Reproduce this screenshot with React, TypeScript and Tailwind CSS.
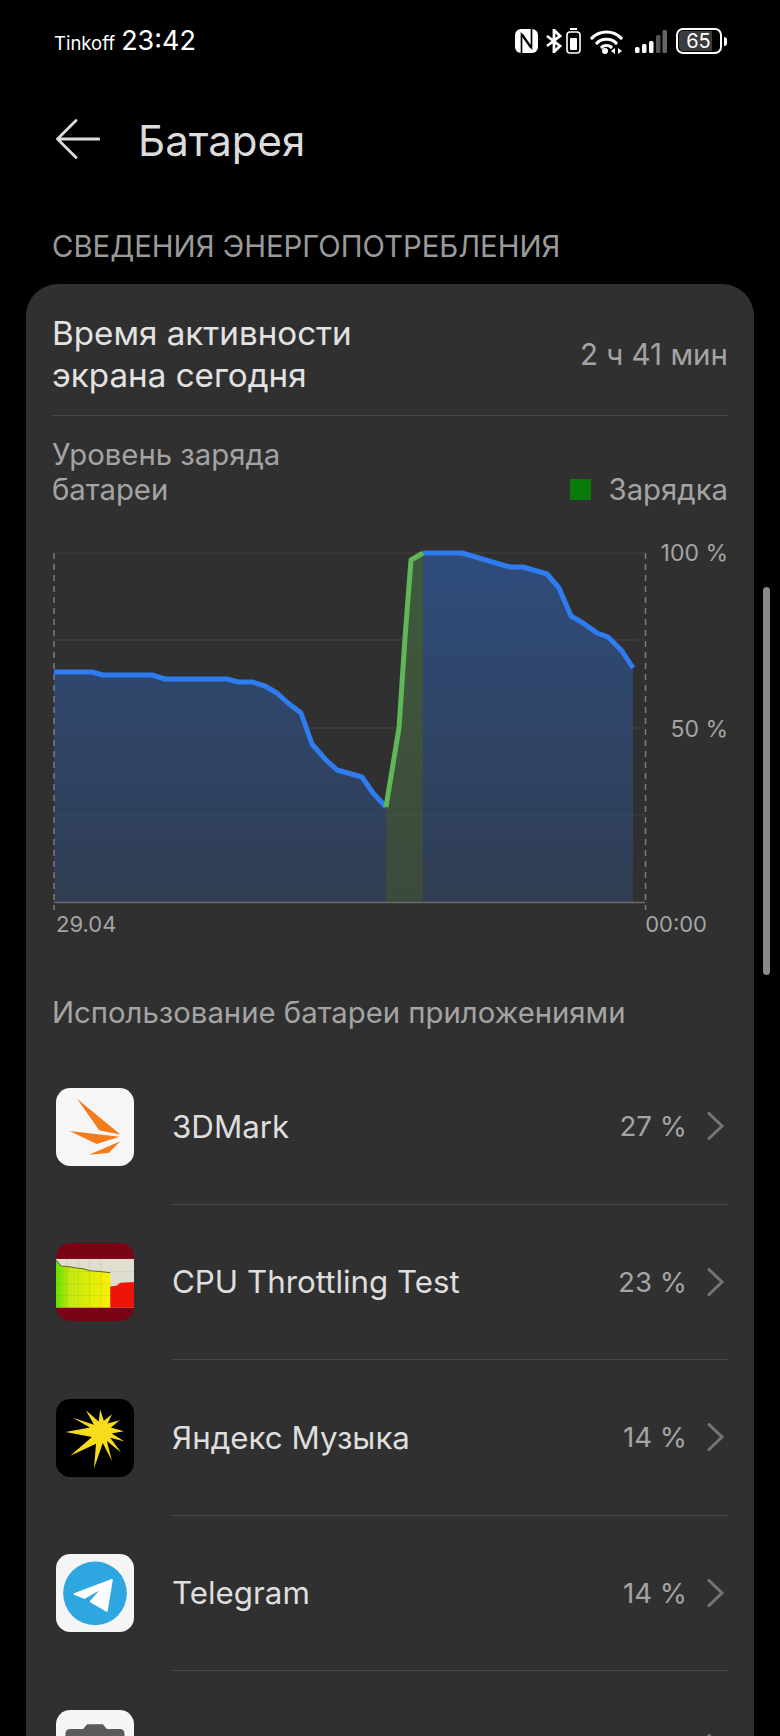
import { ReactNode } from 'react';

const blueA =
  '54,671 92,671 103,674 152,674 165,678 227,678 238,681 252,681 265,685 277,692 288,702 301,712 312,743 325,758 337,769 362,776 373,792 386,806';
const green = '386,806 399,727 405,637 411,559 423,552';
const blueB =
  '423,552 462,552 510,566 523,566 547,573 559,587 571,615 583,622 597,632 608,636 622,650 633,667';

//region Status bar
const StatusIcons = () => (
  <div className="flex items-center">
    {/* nfc */}
    <svg width="23" height="24" viewBox="0 0 23 24">
      <rect width="23" height="24" rx="6" fill="#fff" />
      <path d="M6.500 24V5.500L16 19M16.500 0v18.500L7 5" fill="none" stroke="#000" strokeWidth="1.700" />
    </svg>
    {/* bluetooth */}
    <svg width="16" height="24" viewBox="0 0 16 24" className="ml-[8px]">
      <path d="M1 7l13 10-6 6V1l6 6L1 17" stroke="#fff" strokeWidth="2.800" fill="none" />
    </svg>
    {/* small battery */}
    <svg width="15" height="26" viewBox="0 0 15 26" className="ml-[4px]">
      <rect x="4" y="0" width="7" height="2" fill="#fff" />
      <rect x="1" y="4" width="13" height="21" rx="3" stroke="#fff" strokeWidth="1.600" fill="none" />
      <rect x="4" y="10" width="7" height="12" rx="1" fill="#fff" />
    </svg>
    {/* wifi */}
    <svg width="33" height="25" viewBox="0 0 33 25" className="ml-[9px]">
      <path d="M2 9c8-8 21-8 29 0M7 14c5-5 14-5 19 0M12 18c2-2 7-2 9 0" stroke="#fff" strokeWidth="3.200" fill="none" strokeLinecap="round" />
      <circle cx="15" cy="22" r="3" fill="#fff" />
      <path d="M21 22l4-3v6zM32 22l-4-3v6z" fill="#fff" />
    </svg>
    {/* signal */}
    <svg width="32" height="24" viewBox="0 0 32 24" className="ml-[12px]">
      <rect x="0" y="18" width="4.500" height="6" rx="1.500" fill="#fff" />
      <rect x="7" y="15" width="4.500" height="9" rx="1.500" fill="#fff" />
      <rect x="14" y="12" width="4.500" height="12" rx="1.500" fill="#fff" />
      <rect x="21" y="6" width="4.500" height="18" rx="1.500" fill="#555" />
      <rect x="27.500" y="1" width="4.500" height="23" rx="1.500" fill="#666" />
    </svg>
    {/* battery */}
    <div className="ml-[9px] flex h-[26px] w-[46px] items-center rounded-[7px] border-2 border-white p-[1px]">
      <div className="flex h-full w-[33px] items-center justify-center rounded-l-[4px] bg-[#3c3c3c]">
        <span className="ml-[6px] text-[20px] leading-none text-white">65</span>
      </div>
    </div>
    <div className="ml-[2px] h-[9px] w-[3px] rounded-r-sm bg-white" />
  </div>
);

const StatusBar = () => (
  <div className="flex h-[82px] items-center justify-between pr-[53px] pl-[54px]">
    <div className="flex items-baseline text-white">
      <span className="text-[18.500px]">Tinkoff</span>
      <span className="ml-[6px] text-[27px]">23:42</span>
    </div>
    <StatusIcons />
  </div>
);
//endregion

//region App icons
const Mark3D = () => (
  <svg viewBox="0 0 230 230" className="h-full w-full">
    <rect width="230" height="230" rx="42" fill="#f6f6f6" />
    <polygon points="62,32 190,137 128,125" fill="#f57c1c" />
    <polygon points="40,127 188,144 120,165" fill="#f57c1c" />
    <polygon points="97,197 190,157 155,192" fill="#f57c1c" />
  </svg>
);

const CpuTest = () => (
  <svg viewBox="0 0 230 230" className="h-full w-full">
    <defs>
      <linearGradient id="cpuFill" x1="0" x2="1" y1="0" y2="0">
        <stop offset="0" stopColor="#5fe000" />
        <stop offset="0.25" stopColor="#c4ea10" />
        <stop offset="1" stopColor="#fbf000" />
      </linearGradient>
    </defs>
    <rect width="230" height="230" rx="42" fill="#7a0316" />
    <rect x="0" y="47" width="230" height="143" fill="#e0dfcf" />
    <polygon points="0,50 15,68 40,70 60,74 80,76 100,82 130,84 160,88 160,190 0,190" fill="url(#cpuFill)" />
    <polyline points="0,50 15,68 40,70 60,74 80,76 100,82 130,84 160,88" fill="none" stroke="#5b6a2a" strokeWidth="3" />
    <path d="M33 47v143M66 47v143M99 47v143M132 47v143M0 85h230M0 120h230M0 155h230" stroke="#8a8a40" strokeOpacity="0.25" strokeWidth="2" />
    <polygon points="160,128 178,126 190,117 230,115 230,190 160,190" fill="#ee1408" />
  </svg>
);

const YandexMusic = () => (
  <svg viewBox="0 0 230 230" className="h-full w-full">
    <rect width="230" height="230" rx="42" fill="#000" />
    <polygon
      points="28,97 100,84 50,55 112,76 88,33 126,66 130,30 141,64 165,45 152,72 188,63 162,84 200,95 164,102 202,125 160,114 192,158 150,124 165,183 138,130 112,205 118,132 42,167 106,112"
      fill="#f6dc1a"
    />
  </svg>
);

const Telegram = () => (
  <svg viewBox="0 0 230 230" className="h-full w-full">
    <rect width="230" height="230" rx="42" fill="#f5f5f5" />
    <circle cx="115" cy="116" r="94" fill="#2ea6e0" />
    <polygon
      points="165,76 54,118 84,130 140,97 102,140 150,168"
      fill="#fff"
      stroke="#fff"
      strokeWidth="5"
      strokeLinejoin="round"
    />
  </svg>
);

const Camera = () => (
  <svg viewBox="0 0 230 230" className="h-full w-full">
    <rect width="230" height="230" rx="42" fill="#f5f5f5" />
    <path d="M28 70q0-14 14-14h38l12-14h46l12 14h38q14 0 14 14v110H28z" fill="#5a5a5a" />
  </svg>
);
//endregion

//region App row
const AppRow = ({ icon, name, value }: { icon: ReactNode; name: string; value: string }) => (
  <div className="flex h-[155.5px] items-center">
    <div className="mr-[38px] ml-[4px] h-[78px] w-[78px] shrink-0">{icon}</div>
    <div className="flex h-full grow items-center justify-between border-b border-[#484848]">
      <span className="pt-[2px] text-[31.300px] text-[#dedede]">{name}</span>
      <div className="flex items-center">
        <span className="pt-[2px] text-[27.700px] text-[#a4a4a4]">{value}</span>
        <svg width="18" height="28" viewBox="0 0 18 28" className="mr-[3px] ml-[20px]">
          <path d="M2 1.500l13 12.500-13 12.500" fill="none" stroke="#757575" strokeWidth="3" strokeLinecap="round" />
        </svg>
      </div>
    </div>
  </div>
);
//endregion

//region Chart
const Chart = () => (
  <div className="flex">
    <svg width="596" height="361" viewBox="52 548 596 361" className="shrink-0">
      <defs>
        <linearGradient id="blueFill" gradientUnits="userSpaceOnUse" x1="0" x2="0" y1="552" y2="901">
          <stop offset="0" stopColor="#2f4c7c" />
          <stop offset="1" stopColor="#303d52" />
        </linearGradient>
        <linearGradient id="greenFill" gradientUnits="userSpaceOnUse" x1="0" x2="0" y1="552" y2="901">
          <stop offset="0" stopColor="#3f5a3b" />
          <stop offset="1" stopColor="#3c4a3c" />
        </linearGradient>
      </defs>
      {[552, 639, 727, 814].map((y) => (
        <line key={y} x1="54" x2="645" y1={y} y2={y} stroke="#404040" strokeWidth="1" />
      ))}
      <polygon points={`54,901 ${blueA} 386,901`} fill="url(#blueFill)" />
      <polygon points={`${blueB} 633,901 423,901`} fill="url(#blueFill)" />
      <polygon points={`${green} 423,901 386,901`} fill="url(#greenFill)" />
      {[639, 727, 814].map((y) => (
        <line key={y} x1="54" x2="633" y1={y} y2={y} stroke="#ffffff" strokeOpacity="0.04" strokeWidth="1" />
      ))}
      <line x1="54" x2="645" y1="901.500" y2="901.500" stroke="#6a6a6a" strokeWidth="1.500" />
      <line x1="54" x2="54" y1="552" y2="909" stroke="#7c7c7c" strokeWidth="1.500" strokeDasharray="6 5" />
      <line x1="645.500" x2="645.500" y1="552" y2="909" stroke="#7c7c7c" strokeWidth="1.500" strokeDasharray="6 5" />
      <polyline points={blueA} fill="none" stroke="#2f7bf0" strokeWidth="5" strokeLinejoin="round" />
      <polyline points={blueB} fill="none" stroke="#2f7bf0" strokeWidth="5" strokeLinejoin="round" />
      <polyline points={green} fill="none" stroke="#5fb757" strokeWidth="5" strokeLinejoin="round" />
    </svg>
    <div className="flex grow flex-col items-end text-[23px] leading-[30px] text-[#a4a4a4]">
      <span className="-mt-[11px] mb-[146px]">100 %</span>
      <span>50 %</span>
    </div>
  </div>
);
//endregion

//region App
const App = () => {
  return (
    <div className="relative h-[1736px] w-[780px] overflow-hidden bg-black font-['Inter',sans-serif]">
      <StatusBar />
      <div className="flex h-[114px] items-center pl-[56px]">
        <svg width="44" height="40" viewBox="0 0 44 40">
          <path d="M20 1.500L1.500 20 20 38.500M1.500 20H43" fill="none" stroke="#dcdcdc" strokeWidth="2.800" strokeLinecap="round" strokeLinejoin="round" />
        </svg>
        <h1 className="ml-[38px] pt-[3px] text-[42px] text-[#dcdcdc]">Батарея</h1>
      </div>
      <div className="flex h-[88px] items-center pt-[14px] pl-[52px] text-[29.300px] text-[#9a9a9a]">
        СВЕДЕНИЯ ЭНЕРГОПОТРЕБЛЕНИЯ
      </div>
      <section className="mx-[26px] rounded-t-[32px] bg-[#303030] px-[26px]">
        <div className="flex items-center justify-between border-b border-[#484848] pt-[28px] pb-[19px]">
          <div className="text-[33.200px] leading-[42px] text-[#e2e2e2]">
            <p>Время активности</p>
            <p>экрана сегодня</p>
          </div>
          <span className="text-[29.500px] text-[#a4a4a4]">2 ч 41 мин</span>
        </div>
        <div className="mb-[42px] flex items-end justify-between pt-[21px] text-[29.300px] leading-[35px] text-[#a4a4a4]">
          <div>
            <p>Уровень заряда</p>
            <p>батареи</p>
          </div>
          <div className="flex items-center">
            <div className="mr-[18px] h-[21px] w-[21px] bg-[#0a7a0a]" />
            <span>Зарядка</span>
          </div>
        </div>
        <Chart />
        <div className="-mt-[1px] flex pl-[4px] text-[22px] leading-[30px] text-[#a4a4a4]">
          <span>29.04</span>
          <span className="mr-[21px] ml-auto">00:00</span>
        </div>
        <p className="mt-[56px] text-[29.300px] leading-[36px] text-[#a4a4a4]">Использование батареи приложениями</p>
        <div className="mt-[18px]">
          <AppRow icon={<Mark3D />} name="3DMark" value="27 %" />
          <AppRow icon={<CpuTest />} name="CPU Throttling Test" value="23 %" />
          <AppRow icon={<YandexMusic />} name="Яндекс Музыка" value="14 %" />
          <AppRow icon={<Telegram />} name="Telegram" value="14 %" />
          <AppRow icon={<Camera />} name="" value="" />
        </div>
      </section>
      {/* scrollbar */}
      <div className="absolute top-[587px] right-[10px] h-[388px] w-[7px] rounded-full bg-[#8a8a8a]" />
    </div>
  );
};
//endregion

export default App;
